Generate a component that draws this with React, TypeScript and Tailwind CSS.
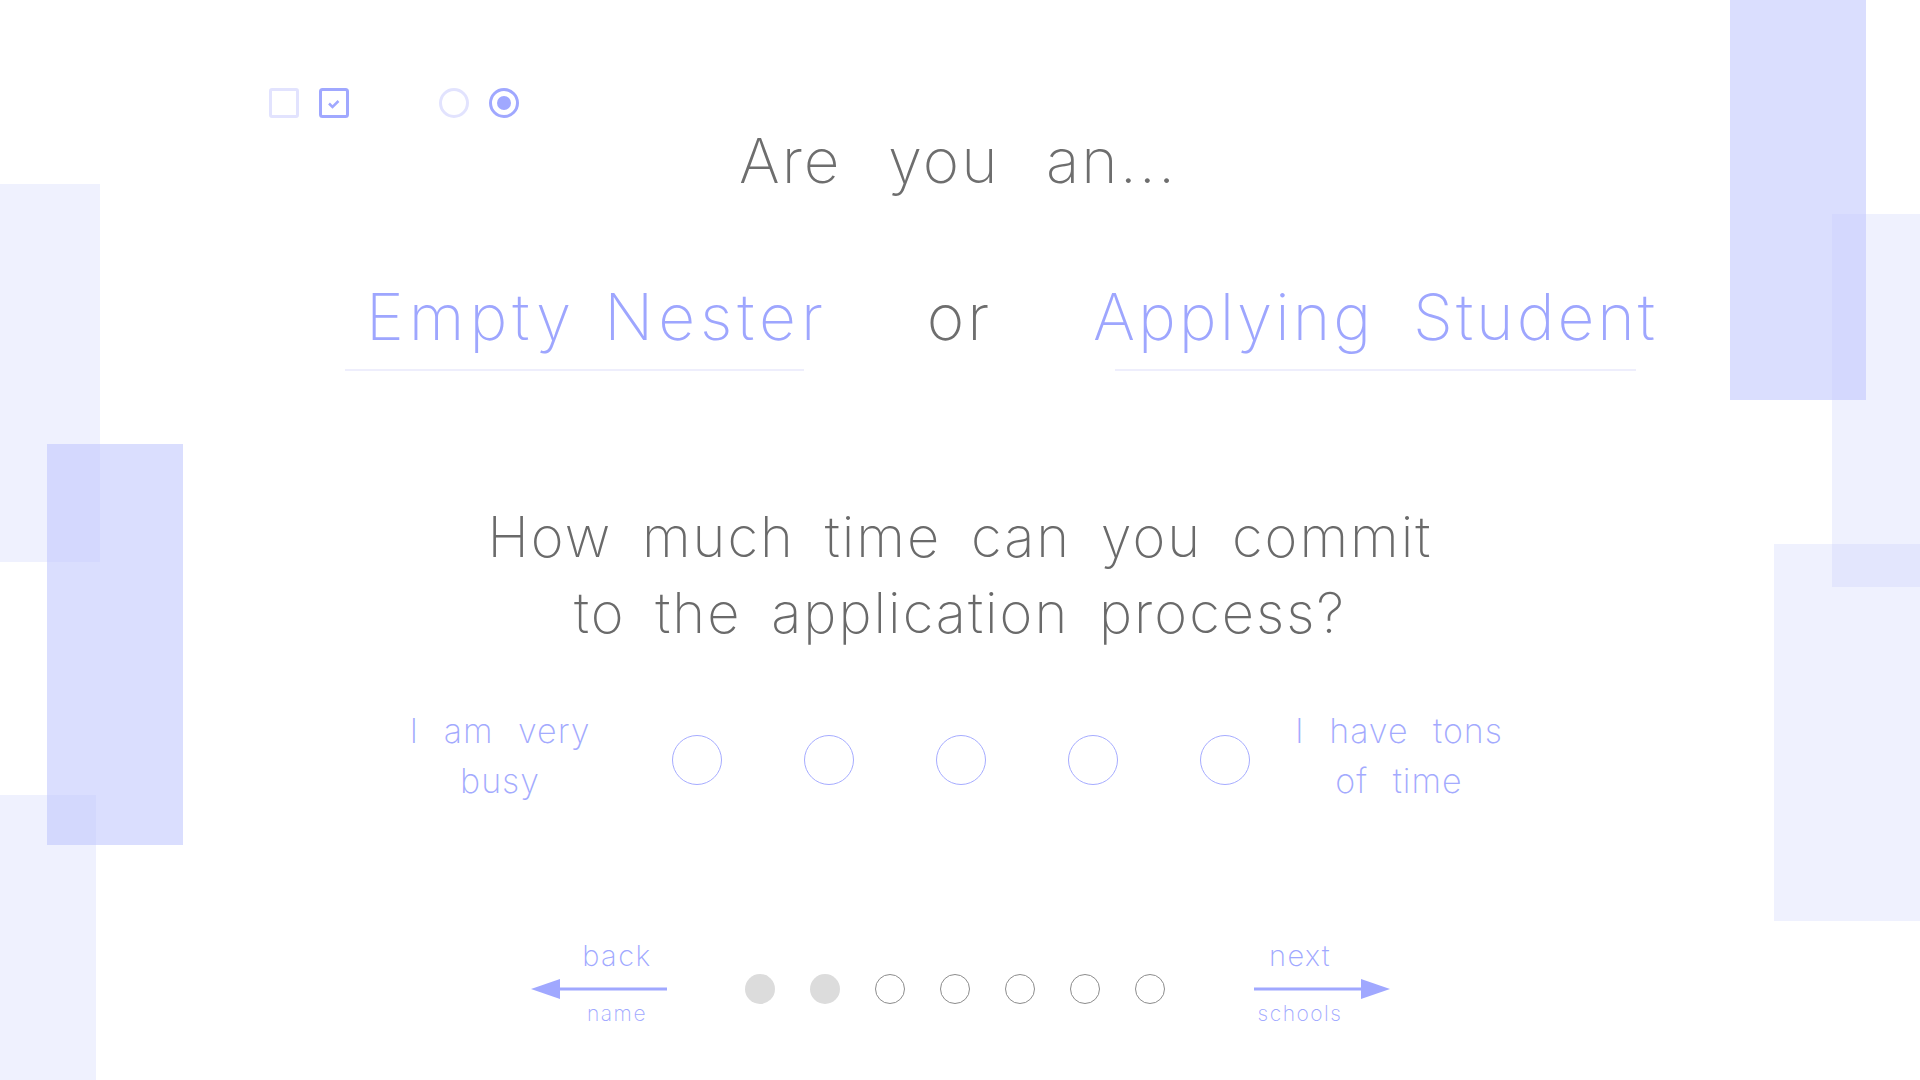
import { useState } from 'react'

const scaleSteps = [1, 2, 3, 4, 5]
const progress = [true, true, false, false, false, false, false]

function CheckIcon() {
  return (
    <svg viewBox="0 0 30 30" className="h-[30px] w-[30px]">
      <rect x="1.5" y="1.5" width="27" height="27" rx="2" fill="none" stroke="#a0a8ff" strokeWidth="3" />
      <path d="M10 15.5 L13.5 19 L19.5 13" fill="none" stroke="#a0a8ff" strokeWidth="2.5" />
    </svg>
  )
}

function Arrow({ dir }: { dir: 'left' | 'right' }) {
  return (
    <svg viewBox="0 0 136 20" className="h-[20px] w-[136px]">
      {dir === 'left' ? (
        <>
          <polygon points="0,10 29,0 29,20" fill="#a0a8ff" />
          <rect x="28" y="8.5" width="108" height="3" fill="#a0a8ff" />
        </>
      ) : (
        <>
          <rect x="0" y="8.5" width="108" height="3" fill="#a0a8ff" />
          <polygon points="136,10 107,0 107,20" fill="#a0a8ff" />
        </>
      )}
    </svg>
  )
}

export default function App() {
  const [role, setRole] = useState<'nester' | 'student' | null>(null)
  const [time, setTime] = useState<number | null>(null)

  return (
    <div className="relative min-h-screen w-full overflow-hidden bg-white font-['Inter',sans-serif] font-extralight">
      {/* fondo: bloques decorativos */}
      <div className="pointer-events-none absolute left-0 top-[184px] h-[378px] w-[100px] bg-[#c1c8fd]/25" />
      <div className="pointer-events-none absolute left-[47px] top-[444px] h-[401px] w-[136px] bg-[#c1c8fd]/60" />
      <div className="pointer-events-none absolute left-0 top-[795px] h-[285px] w-[96px] bg-[#c1c8fd]/25" />
      <div className="pointer-events-none absolute left-[1832px] top-[214px] h-[373px] w-[88px] bg-[#c1c8fd]/25" />
      <div className="pointer-events-none absolute left-[1730px] top-0 h-[400px] w-[136px] bg-[#c1c8fd]/60" />
      <div className="pointer-events-none absolute left-[1774px] top-[544px] h-[377px] w-[146px] bg-[#c1c8fd]/25" />

      <div className="relative flex flex-col">
        {/* muestras de controles */}
        <div className="flex items-center pl-[269px] pt-[88px]">
          <span className="h-[30px] w-[30px] rounded-[3px] border-[3px] border-[#e2e3fe]" />
          <span className="ml-[20px]"><CheckIcon /></span>
          <span className="ml-[90px] h-[30px] w-[30px] rounded-full border-[3px] border-[#e2e3fe]" />
          <span className="ml-[20px] flex h-[30px] w-[30px] items-center justify-center rounded-full border-[3px] border-[#a0a8ff]">
            <span className="h-[14px] w-[14px] rounded-full bg-[#a0a8ff]" />
          </span>
        </div>

        <h1 className="mt-[12px] pr-[4px] text-center text-[62px] leading-none tracking-[2px] text-[#6e6e6e] [word-spacing:27px]">
          Are you an...
        </h1>

        <div className="mt-[93px] flex items-start pl-[345px]">
          <button
            type="button"
            onClick={() => setRole('nester')}
            className={`flex w-[459px] border-b-2 pb-[20px] pl-[21px] text-[64px] leading-none tracking-[5px] whitespace-nowrap text-[#9ea6fe] [word-spacing:5px] ${role === 'nester' ? 'border-[#c9cdfe]' : 'border-[#eeeefc]'}`}
          >
            Empty Nester
          </button>
          <span className="flex w-[311px] justify-center text-[64px] leading-none tracking-[3px] text-[#6e6e6e]">or</span>
          <button
            type="button"
            onClick={() => setRole('student')}
            className={`flex w-[521px] justify-center border-b-2 pb-[20px] text-[64px] leading-none tracking-[3px] whitespace-nowrap text-[#9ea6fe] [word-spacing:18px] ${role === 'student' ? 'border-[#c9cdfe]' : 'border-[#eeeefc]'}`}
          >
            Applying Student
          </button>
        </div>

        <p className="mt-[128px] text-center text-[56px] leading-[76px] tracking-[2px] text-[#6a6a6a] [word-spacing:12px]">
          How much time can you commit
          <br />
          to the application process?
        </p>

        <div className="mt-[55px] flex items-center justify-center">
          <div className="w-[220px] text-center text-[34px] leading-[50px] tracking-[1px] text-[#a3aafe] [word-spacing:14px]">
            I am very
            <br />
            busy
          </div>
          <div className="ml-[62px] mt-[8px] flex gap-[82px]">
            {scaleSteps.map((s) => (
              <button
                key={s}
                type="button"
                onClick={() => setTime(s)}
                aria-label={`Opción ${s}`}
                className={`h-[50px] w-[50px] rounded-full border border-[#a6acff] ${time === s ? 'bg-[#dadefe]' : 'bg-transparent'}`}
              />
            ))}
          </div>
          <div className="ml-[18px] w-[262px] text-center text-[34px] leading-[50px] tracking-[1px] text-[#a3aafe] [word-spacing:14px]">
            I have tons
            <br />
            of time
          </div>
        </div>

        {/* navegación */}
        <div className="mt-[135px] flex items-start pl-[531px]">
          <div className="flex w-[136px] flex-col">
            <span className="pl-[36px] text-center text-[29px] leading-none tracking-[1.5px] text-[#a0a8ff]">back</span>
            <span className="mt-[9px]"><Arrow dir="left" /></span>
            <span className="mt-[4px] pl-[36px] text-center text-[21px] leading-none tracking-[1.5px] text-[#a0a8ff]">name</span>
          </div>
          <div className="ml-[78px] mt-[33px] flex gap-[35px]">
            {progress.map((done, i) => (
              <span
                key={i}
                className={`h-[30px] w-[30px] rounded-full ${done ? 'bg-[#dcdcdc]' : 'border-[1.5px] border-[#8c8c8c]'}`}
              />
            ))}
          </div>
          <div className="ml-[89px] flex w-[136px] flex-col">
            <span className="pr-[44px] text-center text-[29px] leading-none tracking-[1.5px] text-[#a0a8ff]">next</span>
            <span className="mt-[9px]"><Arrow dir="right" /></span>
            <span className="mt-[4px] pr-[44px] text-center text-[21px] leading-none tracking-[1.5px] text-[#a0a8ff]">schools</span>
          </div>
        </div>
      </div>
    </div>
  )
}
